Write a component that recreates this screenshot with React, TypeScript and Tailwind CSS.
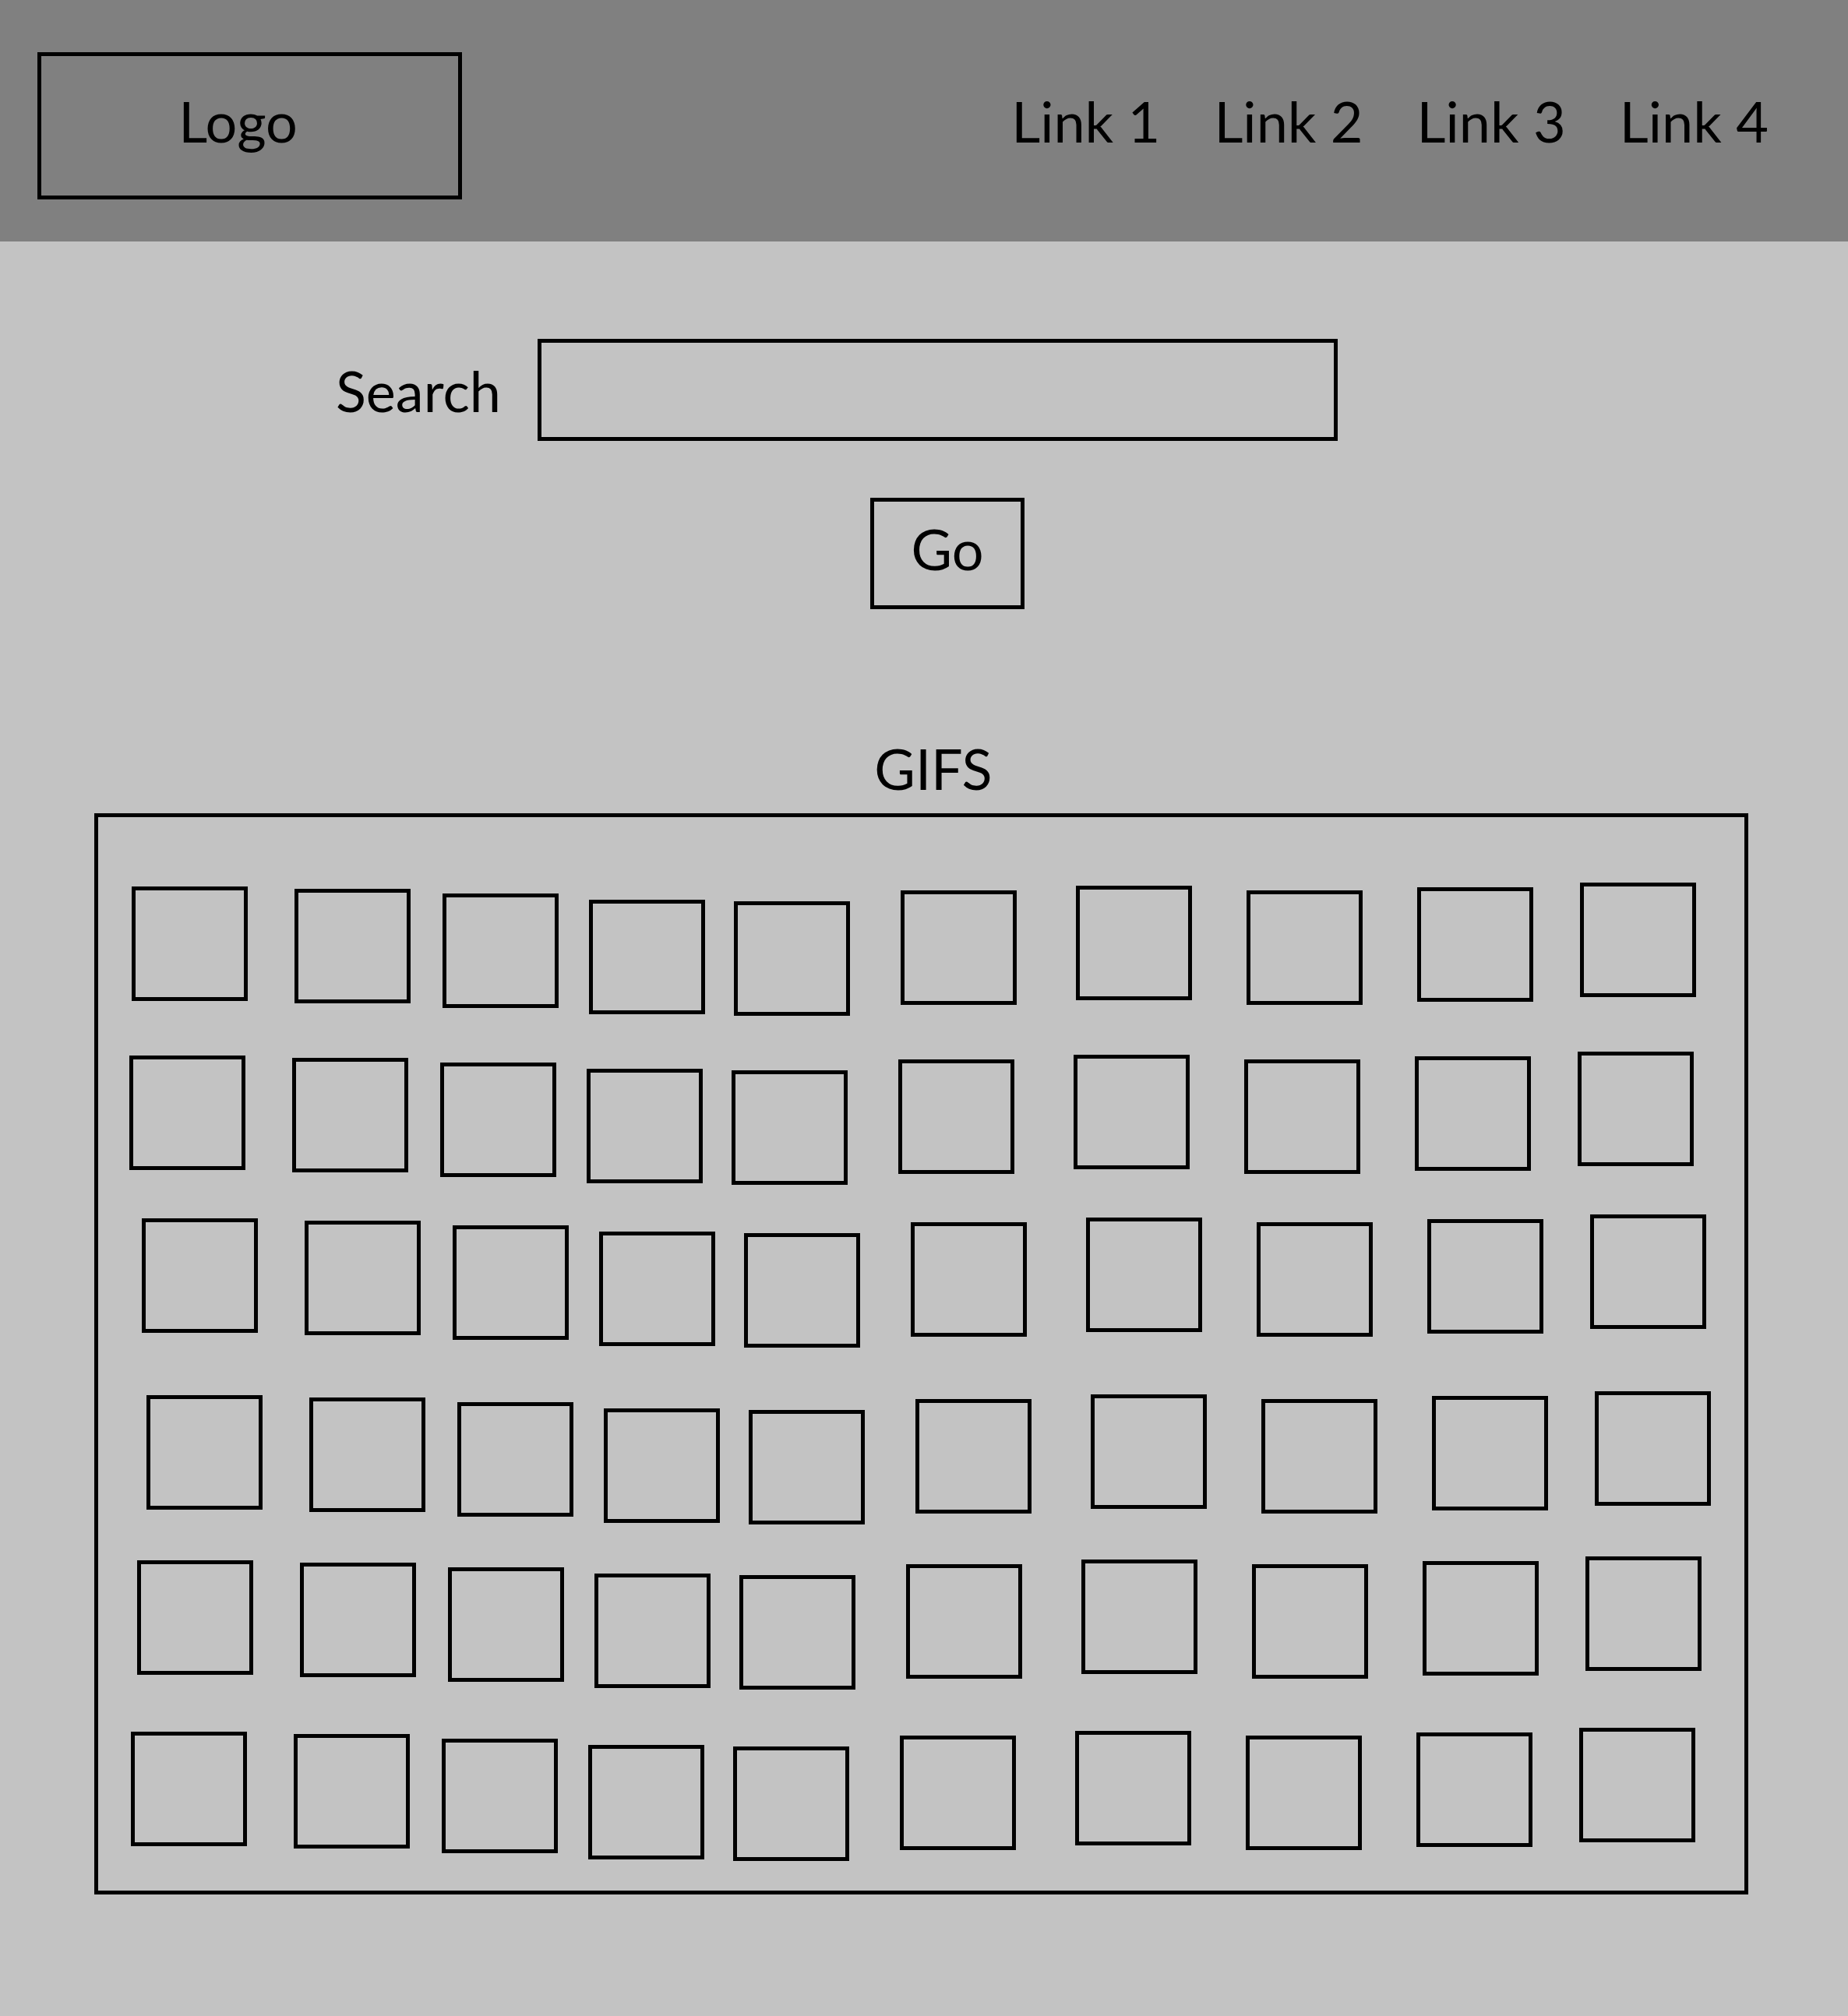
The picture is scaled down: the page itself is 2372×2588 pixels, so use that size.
import React from 'react';

// wireframe: header, search form, grid of gif placeholders

const links = ['Link 1', 'Link 2', 'Link 3', 'Link 4'];

// each row of the sketch is shifted a little, the columns keep the same jitter
const rows = [
  { key: 'r1', cls: 'mt-[84px] pl-[43px]' },
  { key: 'r2', cls: 'mt-[46px] pl-[40px]' },
  { key: 'r3', cls: 'mt-[38px] pl-[56px]' },
  { key: 'r4', cls: 'mt-[56px] pl-[62px]' },
  { key: 'r5', cls: 'mt-[41px] pl-[50px]' },
  { key: 'r6', cls: 'mt-[49px] pl-[42px]' },
];

const cols = [
  'ml-0 mt-[5px]',
  'ml-[60px] mt-[8px]',
  'ml-[41px] mt-[14px]',
  'ml-[39px] mt-[22px]',
  'ml-[37px] mt-[24px]',
  'ml-[65px] mt-[10px]',
  'ml-[76px] mt-[4px]',
  'ml-[70px] mt-[10px]',
  'ml-[70px] mt-[6px]',
  'ml-[60px] mt-0',
];

const font = { fontFamily: 'Lato, "Open Sans", sans-serif' };

const App: React.FC = () => {
  return (
    <div className="w-[2372px] min-h-[2588px] bg-[#c3c3c3] text-black text-[72px] leading-none" style={font}>
      <header className="h-[310px] bg-[#808080] flex items-center justify-between pl-[48px] pr-[102px]">
        <div className="mt-[13px] w-[545px] h-[189px] border-[5px] border-black flex items-center justify-center pr-[30px] pb-[14px]">
          <span>Logo</span>
        </div>
        <nav className="flex items-center gap-[69px]">
          {links.map((l) => (
            <a key={l} href="#" className="text-black">
              {l}
            </a>
          ))}
        </nav>
      </header>

      <main className="flex flex-col">
        <div className="flex items-center mt-[125px] pl-[431px]">
          <label className="w-[259px]">Search</label>
          <div className="w-[1027px] h-[131px] border-[5px] border-black" />
        </div>

        <div className="mt-[73px] ml-[1117px] w-[198px] h-[143px] border-[5px] border-black flex items-center justify-center pb-[14px]">
          Go
        </div>

        <div className="mt-[168px] pl-[24px] text-center">GIFS</div>

        <div className="mt-[22px] ml-[121px] w-[2123px] h-[1388px] border-[5px] border-black flex flex-col">
          {rows.map((r) => (
            <div key={r.key} className={`flex items-start ${r.cls}`}>
              {cols.map((c, i) => (
                <div key={i} className={`w-[149px] h-[147px] shrink-0 border-[5px] border-black ${c}`} />
              ))}
            </div>
          ))}
        </div>
      </main>
    </div>
  );
};

export default App;
